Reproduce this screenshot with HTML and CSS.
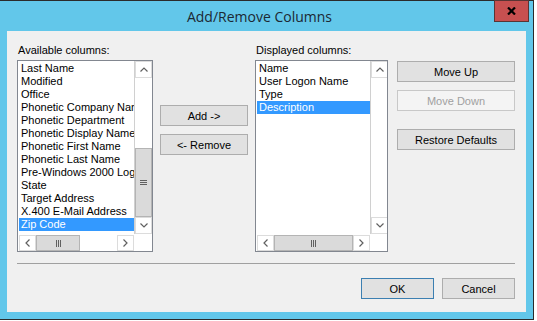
FILE: index.html
```html
<!DOCTYPE html>
<html lang="en">
<head>
<meta charset="UTF-8" />
<title>Add/Remove Columns</title>
<link rel="stylesheet" href="styles.css">
</head>
<body>

<div class="window">
  <div class="titlebar">
    <span class="title">Add/Remove Columns</span>
    <button class="close" title="Close">
      <svg width="9" height="8" viewBox="0 0 9 8"><path d="M1 0.5L8 7.5M8 0.5L1 7.5" stroke="#000" stroke-width="2.2"/></svg>
    </button>
  </div>

  <div class="panel">
    <div class="columns">
      <div class="col col-list">
        <label class="caption">Available columns:</label>
        <div class="listbox list-avail">
          <ul class="items">
            <li>Last Name</li>
            <li>Modified</li>
            <li>Office</li>
            <li>Phonetic Company Name</li>
            <li>Phonetic Department</li>
            <li>Phonetic Display Name</li>
            <li>Phonetic First Name</li>
            <li>Phonetic Last Name</li>
            <li>Pre-Windows 2000 Logon Name</li>
            <li>State</li>
            <li>Target Address</li>
            <li>X.400 E-Mail Address</li>
            <li class="selected">Zip Code</li>
          </ul>
          <div class="vscroll">
            <span class="arrow"><svg width="8" height="5" viewBox="0 0 8 5"><path d="M0.5 4.5L4 1L7.5 4.5" fill="none" stroke="#606060" stroke-width="1.2"/></svg></span>
            <div class="track track-end">
              <span class="thumb vthumb"><svg width="7" height="5" viewBox="0 0 7 5"><path d="M0 0.5H7M0 2.5H7M0 4.5H7" stroke="#606060"/></svg></span>
            </div>
            <span class="arrow"><svg width="8" height="5" viewBox="0 0 8 5"><path d="M0.5 0.5L4 4L7.5 0.5" fill="none" stroke="#606060" stroke-width="1.2"/></svg></span>
          </div>
          <div class="hscroll">
            <span class="arrow"><svg width="5" height="8" viewBox="0 0 5 8"><path d="M4.5 0.5L1 4L4.5 7.5" fill="none" stroke="#606060" stroke-width="1.2"/></svg></span>
            <span class="thumb hthumb thumb-short"><svg width="5" height="7" viewBox="0 0 5 7"><path d="M0.5 0V7M2.5 0V7M4.5 0V7" stroke="#606060"/></svg></span>
            <div class="track"></div>
            <span class="arrow"><svg width="5" height="8" viewBox="0 0 5 8"><path d="M0.5 0.5L4 4L0.5 7.5" fill="none" stroke="#606060" stroke-width="1.2"/></svg></span>
          </div>
          <div class="corner"></div>
        </div>
      </div>

      <div class="col col-mid">
        <button class="btn">Add -&gt;</button>
        <button class="btn">&lt;- Remove</button>
      </div>

      <div class="col col-list">
        <label class="caption">Displayed columns:</label>
        <div class="listbox list-disp">
          <ul class="items">
            <li>Name</li>
            <li>User Logon Name</li>
            <li>Type</li>
            <li class="selected">Description</li>
          </ul>
          <div class="vscroll">
            <span class="arrow"><svg width="8" height="5" viewBox="0 0 8 5"><path d="M0.5 4.5L4 1L7.5 4.5" fill="none" stroke="#606060" stroke-width="1.2"/></svg></span>
            <div class="track"></div>
            <span class="arrow"><svg width="8" height="5" viewBox="0 0 8 5"><path d="M0.5 0.5L4 4L7.5 0.5" fill="none" stroke="#606060" stroke-width="1.2"/></svg></span>
          </div>
          <div class="hscroll">
            <span class="arrow"><svg width="5" height="8" viewBox="0 0 5 8"><path d="M4.5 0.5L1 4L4.5 7.5" fill="none" stroke="#606060" stroke-width="1.2"/></svg></span>
            <span class="thumb hthumb thumb-long"><svg width="5" height="7" viewBox="0 0 5 7"><path d="M0.5 0V7M2.5 0V7M4.5 0V7" stroke="#606060"/></svg></span>
            <div class="track"></div>
            <span class="arrow"><svg width="5" height="8" viewBox="0 0 5 8"><path d="M0.5 0.5L4 4L0.5 7.5" fill="none" stroke="#606060" stroke-width="1.2"/></svg></span>
          </div>
          <div class="corner"></div>
        </div>
      </div>

      <div class="col col-side">
        <button class="btn">Move Up</button>
        <button class="btn" disabled>Move Down</button>
        <button class="btn btn-gap">Restore Defaults</button>
      </div>
    </div>

    <div class="separator"></div>

    <div class="footer">
      <button class="btn btn-default">OK</button>
      <button class="btn">Cancel</button>
    </div>
  </div>
</div>

</body>
</html>
```

FILE: styles.css
```css
body { margin: 0; background: #fff; font-family: "Liberation Sans", Arial, sans-serif; font-size: 11px; color: #000; }

.window { position: relative; width: 533px; height: 318px; background: #62c7ea; border: 1px solid #2b2b2b; border-left: none; }
.titlebar { height: 30px; display: flex; align-items: center; justify-content: center; padding-right: 14px; box-sizing: border-box; }
.title { font-family: "Open Sans", "Noto Sans", sans-serif; font-size: 14px; color: #1c2833; margin-top: 1px; }
.close { position: absolute; top: -1px; right: 4px; width: 35px; height: 22px; padding: 0; background: #c75050; border: 1px solid #5a3434; display: flex; align-items: center; justify-content: center; }

.panel { margin: 0 7px; height: 281px; background: #f0f0f0; padding: 13px 11px 0 10px; box-sizing: border-box; }
.columns { display: flex; }
.col { display: flex; flex-direction: column; }
.col-list:first-child { width: 136px; margin-right: 7px; }
.col-mid { width: 88px; margin-right: 7px; padding-top: 61px; gap: 8px; }
.col-list:nth-child(3) { width: 133px; margin-right: 9px; }
.col-side { width: 118px; padding-top: 17px; gap: 8px; }
.caption { display: block; height: 13px; line-height: 13px; padding-left: 1px; margin-bottom: 3px; }

.listbox { height: 192px; box-sizing: border-box; border: 1px solid #828790; background: #fff; display: grid; grid-template-columns: 1fr 17px; grid-template-rows: 1fr 17px; overflow: hidden; }
.items { list-style: none; margin: 0; padding: 1px 0 0 1px; overflow: hidden; }
.items li { height: 13px; line-height: 13px; padding-left: 2px; white-space: nowrap; overflow: hidden; }
.items li.selected { background: #3399ff; color: #fff; }

.vscroll { display: flex; flex-direction: column; border-left: 1px solid #d0d0d0; margin-left: -1px; }
.hscroll { display: flex; padding: 1px 1px 0 1px; }
.track { flex: 1; display: flex; flex-direction: column; }
.track-end { justify-content: flex-end; }
.corner { background: #fff; }

.arrow { width: 17px; height: 17px; box-sizing: border-box; display: flex; align-items: center; justify-content: center; border: 1px solid #dcdcdc; background: #fff; flex-shrink: 0; }
.vscroll .arrow { width: 17px; }
.hscroll .arrow { height: 16px; }
.thumb { box-sizing: border-box; background: #dadada; border: 1px solid #b4b4b4; display: flex; align-items: center; justify-content: center; flex-shrink: 0; }
.vthumb { height: 69px; }
.hthumb { height: 16px; }
.thumb-short { width: 44px; }
.thumb-long { width: 79px; }

.btn { height: 21px; padding: 0; background: #e1e1e1; border: 1px solid #adadad; font-family: "Liberation Sans", Arial, sans-serif; font-size: 11px; color: #000; }
.btn:disabled { background: #f4f4f4; border-color: #c8c8c8; color: #a0a0a0; }
.btn-gap { margin-top: 10px; }
.btn-default { border-color: #3c7fb1; }

.separator { height: 1px; background: #a0a0a0; margin: 11px 0 0; }
.footer { display: flex; justify-content: flex-end; gap: 8px; margin-top: 14px; }
.footer .btn { width: 73px; }
```
